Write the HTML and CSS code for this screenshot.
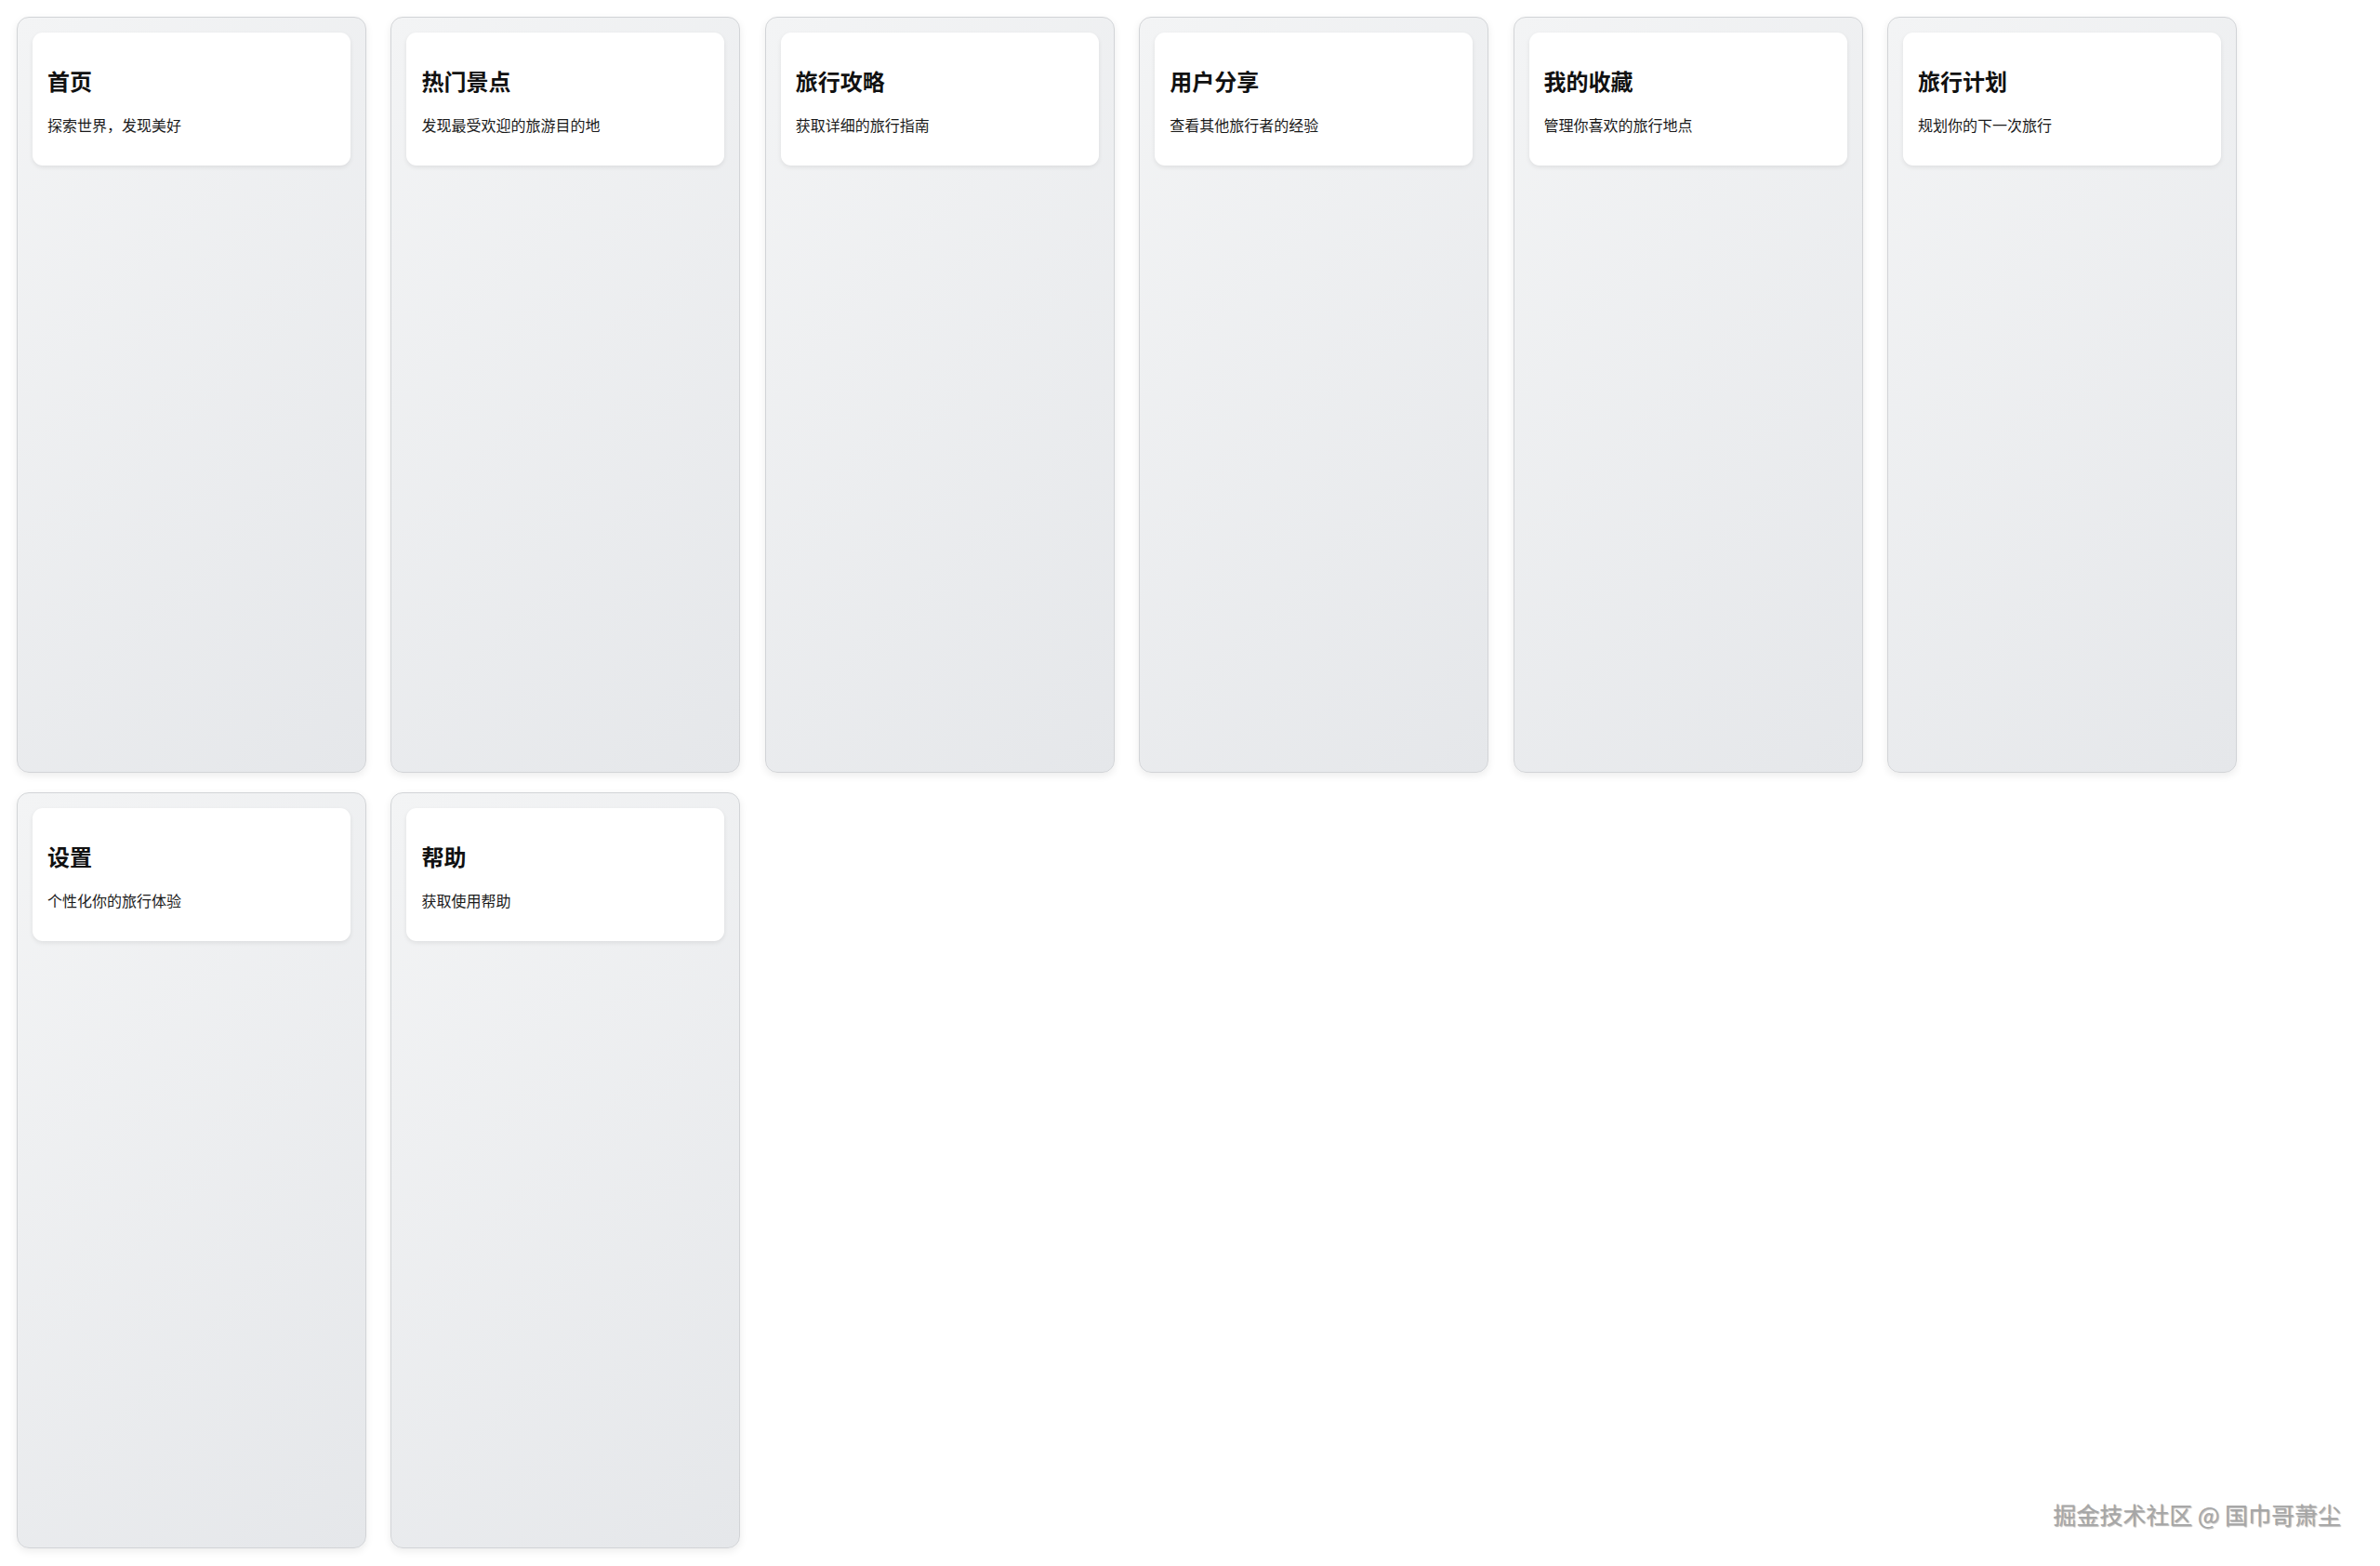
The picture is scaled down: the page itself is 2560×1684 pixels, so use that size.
FILE: index.html
```html
<!DOCTYPE html>
<html lang="zh-CN">
<head>
<meta charset="utf-8">
<title>旅行</title>
<link rel="stylesheet" href="styles.css">
</head>
<body>
<div class="grid">
  <div class="card"><div class="inner"><h3>首页</h3><p>探索世界，发现美好</p></div></div>
  <div class="card"><div class="inner"><h3>热门景点</h3><p>发现最受欢迎的旅游目的地</p></div></div>
  <div class="card"><div class="inner"><h3>旅行攻略</h3><p>获取详细的旅行指南</p></div></div>
  <div class="card"><div class="inner"><h3>用户分享</h3><p>查看其他旅行者的经验</p></div></div>
  <div class="card"><div class="inner"><h3>我的收藏</h3><p>管理你喜欢的旅行地点</p></div></div>
  <div class="card"><div class="inner"><h3>旅行计划</h3><p>规划你的下一次旅行</p></div></div>
  <div class="card"><div class="inner"><h3>设置</h3><p>个性化你的旅行体验</p></div></div>
  <div class="card"><div class="inner"><h3>帮助</h3><p>获取使用帮助</p></div></div>
</div>
<div class="watermark">掘金技术社区 @ 国巾哥萧尘</div>
</body>
</html>
```
FILE: styles.css
```css
html, body {
  margin: 0;
  padding: 0;
  background: #ffffff;
}
body {
  font-family: "Noto Sans CJK SC", "Noto Sans", sans-serif;
  padding: 18px;
  min-height: 1684px;
  box-sizing: border-box;
  position: relative;
}
.grid {
  display: grid;
  grid-template-columns: repeat(6, 376px);
  column-gap: 26.4px;
  row-gap: 21px;
}
.card {
  height: 813px;
  box-sizing: border-box;
  border: 1px solid #d2d4d7;
  border-radius: 13px;
  background: linear-gradient(135deg, #f3f4f5 0%, #e5e7ea 100%);
  box-shadow: 0 3px 8px rgba(0, 0, 0, 0.08);
  padding: 16px;
}
.inner {
  background: #ffffff;
  border-radius: 11px;
  padding: 16px;
  box-shadow: 0 2px 5px rgba(0, 0, 0, 0.08);
}
.inner h3 {
  margin: 20.5px 0 0;
  font-size: 24px;
  line-height: 30px;
  font-weight: 700;
  color: #111111;
}
.inner p {
  margin: 22.5px 0 17.5px;
  font-size: 16px;
  line-height: 20px;
  color: #1a1a1a;
}
.watermark {
  position: absolute;
  right: 42px;
  bottom: 41px;
  font-size: 25px;
  line-height: 30px;
  font-weight: 400;
  color: #a6a6a6;
  text-shadow: 1px 1px 1px rgba(0, 0, 0, 0.3);
  white-space: nowrap;
}
```
